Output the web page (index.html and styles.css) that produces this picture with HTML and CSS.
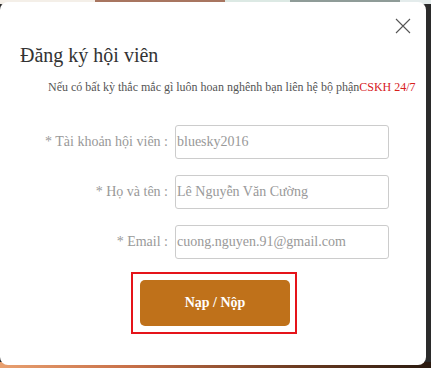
FILE: index.html
```html
<!DOCTYPE html>
<html lang="vi">
<head>
<meta charset="utf-8">
<title>Đăng ký hội viên</title>
<link rel="stylesheet" href="styles.css">
</head>
<body>
<div class="modal">
  <button class="close" aria-label="Đóng">
    <svg width="16" height="16" viewBox="0 0 16 16"><path d="M1 1 L15 15 M15 1 L1 15" stroke="#555" stroke-width="1.1" fill="none"/></svg>
  </button>
  <h1 class="title">Đăng ký hội viên</h1>
  <p class="note">Nếu có bất kỳ thắc mắc gì luôn hoan nghênh bạn liên hệ bộ phận<span class="hot">CSKH 24/7</span></p>
  <form class="form">
    <label class="label">* Tài khoản hội viên :</label>
    <div class="field">bluesky2016</div>
    <label class="label">* Họ và tên :</label>
    <div class="field">Lê Nguyễn Văn Cường</div>
    <label class="label">* Email :</label>
    <div class="field">cuong.nguyen.91@gmail.com</div>
  </form>
  <div class="mark">
    <button class="submit" type="button">Nạp / Nộp</button>
  </div>
</div>
</body>
</html>
```
FILE: styles.css
```css
html, body { margin: 0; padding: 0; }
body {
  width: 431px;
  height: 368px;
  overflow: hidden;
  font-family: "Liberation Serif", "Times New Roman", serif;
  background:
    linear-gradient(90deg, #f4efe8 0 95px, #a87560 95px 225px, #dce9e4 225px 290px, #8f9c98 290px 400px, #e4ecec 400px) top / 100% 4px no-repeat,
    linear-gradient(90deg, #e8a070 0, #c87048 130px, #6a3a20 300px, #2a1a10 431px) bottom / 100% 6px no-repeat,
    #2b2b2b;
}
.modal {
  position: relative;
  box-sizing: border-box;
  margin: 2px 5px 0 0;
  width: 426px;
  height: 363px;
  background: #fff;
  border-radius: 8px;
  padding-top: 41px;
}
.close {
  position: absolute;
  top: 16px;
  right: 15px;
  width: 16px;
  height: 16px;
  padding: 0;
  border: 0;
  background: none;
  display: flex;
}
.title {
  margin: 0 0 0 20px;
  font-size: 20px;
  line-height: 24px;
  font-weight: normal;
  color: #333;
}
.note {
  margin: 12px 0 0 48px;
  font-size: 12px;
  line-height: 16px;
  color: #555;
  white-space: nowrap;
}
.hot { color: #d7201c; }
.form {
  margin-top: 30px;
  display: grid;
  grid-template-columns: 168px 214px;
  column-gap: 7px;
  row-gap: 16px;
  align-items: center;
}
.label {
  text-align: right;
  font-size: 14px;
  color: #999;
}
.field {
  box-sizing: border-box;
  height: 34px;
  border: 1px solid #ccc;
  border-radius: 3px;
  padding-left: 1px;
  display: flex;
  align-items: center;
  font-size: 14px;
  color: #999;
  white-space: nowrap;
}
.mark {
  box-sizing: border-box;
  margin: 13px 0 0 131px;
  width: 166px;
  height: 62px;
  border: 2px solid #e5141a;
  padding: 6px 5px 6px 7px;
}
.submit {
  display: block;
  width: 150px;
  height: 46px;
  border: 0;
  border-radius: 5px;
  background: #bf711a;
  color: #fff;
  font-family: "Liberation Serif", "Times New Roman", serif;
  font-weight: bold;
  font-size: 14px;
  padding: 0;
}
```
